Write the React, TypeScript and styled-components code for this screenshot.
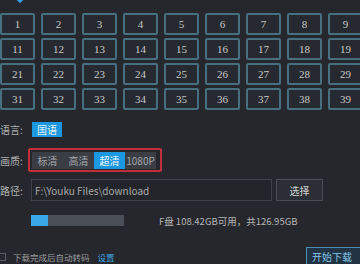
import styled, { createGlobalStyle } from "styled-components";

const Global = createGlobalStyle`
  html, body {
    margin: 0;
    padding: 0;
    background: #25272d;
  }
`;

const CJK = `"Noto Sans CJK SC", "Noto Sans", sans-serif`;

const Root = styled.div`
  width: 360px;
  height: 264px;
  overflow: hidden;
  background: #25272d;
  font-family: ${CJK};
  color: #b4b4b4;
  display: flex;
  flex-direction: column;
`;

const Header = styled.div`
  height: 13px;
  padding-left: 17px;
  overflow: hidden;
`;

const Diamond = styled.div`
  width: 6px;
  height: 6px;
  margin-top: -4px;
  background: #3a9fe2;
  transform: rotate(45deg);
`;

const EpisodeGrid = styled.div`
  display: grid;
  grid-template-columns: repeat(9, 35px);
  grid-auto-rows: 22px;
  column-gap: 6px;
  row-gap: 3px;
`;

const Episode = styled.div`
  box-sizing: border-box;
  border: 2px solid #466f80;
  border-radius: 2px;
  background: #26292f;
  display: flex;
  align-items: center;
  justify-content: center;
  font-family: "Liberation Serif", serif;
  font-size: 11px;
  color: #c9c9c9;
`;

const Form = styled.div`
  display: flex;
  flex-direction: column;
`;

const Row = styled.div<{ $top: number; $h: number }>`
  display: flex;
  align-items: center;
  margin-top: ${(p) => p.$top}px;
  height: ${(p) => p.$h}px;
`;

const Label = styled.div`
  width: 31px;
  flex-shrink: 0;
  font-size: 10px;
  color: #b0b0b0;
  white-space: nowrap;
`;

const Pill = styled.div`
  margin-left: 1px;
  height: 15px;
  padding: 0 5px;
  display: flex;
  align-items: center;
  background: #1b98e0;
  color: #e8f4fc;
  font-size: 10px;
`;

const QualityFrame = styled.div`
  margin-left: -3px;
  box-sizing: border-box;
  height: 24px;
  border: 2px solid #c1303a;
  border-radius: 2px;
  padding: 2px 4px 1px 2px;
  display: flex;
`;

const Segments = styled.div`
  display: flex;
  background: #3a3d44;
`;

const Segment = styled.div<{ $active?: boolean }>`
  width: 31px;
  display: flex;
  align-items: center;
  justify-content: center;
  font-size: 10px;
  background: ${(p) => (p.$active ? "#1b98e0" : "transparent")};
  color: ${(p) => (p.$active ? "#eaf6fd" : "#a4a6aa")};
`;

const PathInput = styled.div`
  box-sizing: border-box;
  width: 241px;
  height: 22px;
  border: 1px solid #3e4148;
  background: #23252b;
  padding-left: 3px;
  display: flex;
  align-items: center;
  font-size: 10px;
  color: #a9a9a9;
`;

const Button = styled.div`
  box-sizing: border-box;
  margin-left: 4px;
  width: 47px;
  height: 22px;
  border: 1px solid #4a4d54;
  background: #2b2e34;
  display: flex;
  align-items: center;
  justify-content: center;
  font-size: 10px;
  color: #d6d6d6;
`;

const Track = styled.div`
  width: 93px;
  height: 11px;
  background: #4a4e56;
  display: flex;
`;

const Fill = styled.div`
  background: #3aa8e8;
`;

const Space = styled.div`
  margin-left: 35px;
  font-size: 9.5px;
  color: #b5b5b5;
  white-space: nowrap;
`;

const Footer = styled.div`
  margin-top: auto;
  height: 17px;
  display: flex;
  align-items: flex-end;
  margin-left: -2px;
`;

const Check = styled.div`
  box-sizing: border-box;
  width: 8px;
  height: 8px;
  border: 1px solid #5a5d63;
  margin-bottom: 3px;
`;

const FooterText = styled.div`
  margin-left: 7px;
  margin-bottom: 1px;
  font-size: 8.5px;
  color: #9c9c9c;
  white-space: nowrap;
`;

const Link = styled.div`
  margin-left: 8px;
  margin-bottom: 1px;
  font-size: 8.5px;
  color: #3ea6e6;
`;

const StartButton = styled.div`
  box-sizing: border-box;
  margin-left: auto;
  margin-right: -10px;
  width: 64px;
  height: 17px;
  border: 1px solid #4c8db3;
  border-bottom: none;
  background: #223444;
  padding-left: 5px;
  display: flex;
  align-items: center;
  font-size: 10px;
  color: #86c6ea;
`;

const rows = [0, 1, 2, 3];

export default function App() {
  const progress = 18;
  return (
    <Root>
      <Global />
      <Header>
        <Diamond />
      </Header>
      <EpisodeGrid>
        {rows.flatMap((r) =>
          Array.from({ length: 9 }, (_, c) => {
            const n = r * 10 + c + 1;
            return <Episode key={n}>{n}</Episode>;
          })
        )}
      </EpisodeGrid>
      <Form>
        <Row $top={12} $h={15}>
          <Label>语言:</Label>
          <Pill>国语</Pill>
        </Row>
        <Row $top={11} $h={24}>
          <Label>画质:</Label>
          <QualityFrame>
            <Segments>
              <Segment>标清</Segment>
              <Segment>高清</Segment>
              <Segment $active>超清</Segment>
              <Segment>1080P</Segment>
            </Segments>
          </QualityFrame>
        </Row>
        <Row $top={7} $h={22}>
          <Label>路径:</Label>
          <PathInput>F:\Youku Files\download</PathInput>
          <Button>选择</Button>
        </Row>
        <Row $top={14} $h={11}>
          <Label />
          <Track>
            <Fill style={{ width: `${progress}%` }} />
          </Track>
          <Space>F盘 108.42GB可用，共126.95GB</Space>
        </Row>
      </Form>
      <Footer>
        <Check />
        <FooterText>下载完成后自动转码</FooterText>
        <Link>设置</Link>
        <StartButton>开始下载</StartButton>
      </Footer>
    </Root>
  );
}
